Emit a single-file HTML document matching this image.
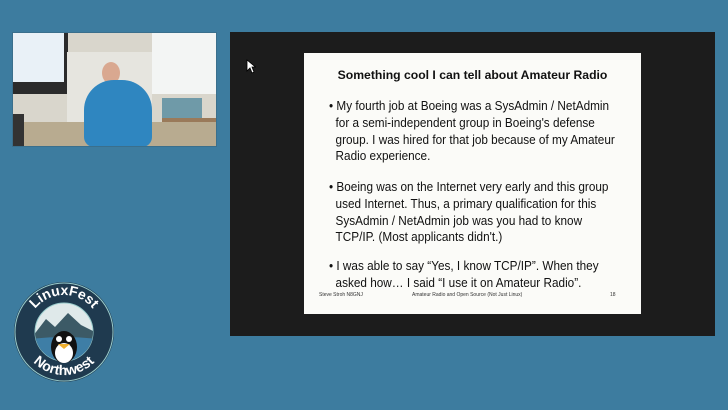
<!DOCTYPE html>
<html><head><style>
body{margin:0;width:728px;height:410px;background:#3d7c9f;position:relative;overflow:hidden;font-family:"Liberation Sans",sans-serif}
.a{position:absolute}
.slide{left:304px;top:53px;width:337px;height:261px;background:#fbfbf8}
.t{position:absolute;left:0;width:337px;text-align:center;top:15px;font-weight:bold;font-size:12.2px;color:#111}
.p{position:absolute;left:25px;font-size:13px;line-height:16.8px;color:#111;white-space:nowrap;transform:scaleX(0.905);transform-origin:0 0}
.f{position:absolute;top:239px;font-size:5px;color:#333}
</style></head><body>
<div class="a" style="left:12px;top:32px;width:205px;height:115px;background:#d9d6cc;overflow:hidden">
 <div class="a" style="left:0;top:0;width:56px;height:62px;background:#2b2b2b"></div>
 <div class="a" style="left:0;top:0;width:52px;height:50px;background:#e9f1f7"></div>
 <div class="a" style="left:55px;top:20px;width:85px;height:80px;background:#e6e5df"></div>
 <div class="a" style="left:140px;top:0;width:65px;height:62px;background:#f3f5f4"></div>
 <div class="a" style="left:150px;top:66px;width:40px;height:20px;background:#6f9aa8"></div>
 <div class="a" style="left:150px;top:86px;width:55px;height:8px;background:#9a7a5a"></div>
 <div class="a" style="left:0;top:90px;width:205px;height:25px;background:#b8ab90"></div>
 <div class="a" style="left:0;top:82px;width:12px;height:33px;background:#333"></div>
 <div class="a" style="left:90px;top:30px;width:18px;height:22px;border-radius:50%;background:#d9a890"></div>
 <div class="a" style="left:72px;top:48px;width:68px;height:67px;border-radius:30px 30px 10px 10px;background:#2f86c0"></div>
 <div class="a" style="left:0;top:0;width:205px;height:115px;border:1px solid #3a6f8c;box-sizing:border-box"></div>
</div>
<div class="a" style="left:230px;top:32px;width:485px;height:304px;background:#1c1c1c"></div>
<svg class="a" style="left:246px;top:59px" width="10" height="15" viewBox="0 0 10 15"><path d="M1 1 L1 12 L4 9 L6 14 L8 13 L6 8 L9.5 8 Z" fill="#fff" stroke="#000" stroke-width="0.8"/></svg>
<div class="a slide">
 <div class="t">Something cool I can tell about Amateur Radio</div>
 <div class="p" style="top:45px">• My fourth job at Boeing was a SysAdmin / NetAdmin<br>&nbsp;&nbsp;for a semi-independent group in Boeing's defense<br>&nbsp;&nbsp;group. I was hired for that job because of my Amateur<br>&nbsp;&nbsp;Radio experience.</div>
 <div class="p" style="top:126px">• Boeing was on the Internet very early and this group<br>&nbsp;&nbsp;used Internet. Thus, a primary qualification for this<br>&nbsp;&nbsp;SysAdmin / NetAdmin job was you had to know<br>&nbsp;&nbsp;TCP/IP. (Most applicants didn't.)</div>
 <div class="p" style="top:205px">• I was able to say “Yes, I know TCP/IP”. When they<br>&nbsp;&nbsp;asked how… I said “I use it on Amateur Radio”.</div>
 <div class="f" style="left:15px">Steve Stroh N8GNJ</div>
 <div class="f" style="left:108px">Amateur Radio and Open Source (Not Just Linux)</div>
 <div class="f" style="left:306px">18</div>
</div>
<svg class="a" style="left:13px;top:281px" width="102" height="102" viewBox="0 0 102 102">
 <defs>
  <path id="top" d="M14 51 A37 37 0 0 1 88 51"/>
  <path id="bot" d="M8 51 A43 43 0 0 0 94 51"/>
 </defs>
 <circle cx="51" cy="51" r="50" fill="#1f3a4f"/>
 <circle cx="51" cy="51" r="49" fill="none" stroke="#9cc" stroke-width="1"/>
 <circle cx="51" cy="51" r="29" fill="#dfe9ea" stroke="#9cc" stroke-width="1"/>
 <clipPath id="c"><circle cx="51" cy="51" r="29"/></clipPath>
 <g clip-path="url(#c)">
 <path d="M20 55 L33 38 L42 46 L55 32 L68 44 L84 52 L84 70 L19 70Z" fill="#3c5a66"/>
 <path d="M18 58 Q51 54 84 58 L84 85 L18 85Z" fill="#3e7ea6"/>
 </g>
 <ellipse cx="51" cy="66" rx="13" ry="16" fill="#111"/>
 <ellipse cx="51" cy="72" rx="9" ry="10" fill="#fff"/>
 <circle cx="46" cy="58" r="3" fill="#fff"/><circle cx="56" cy="58" r="3" fill="#fff"/>
 <path d="M45 63 L57 63 L51 68Z" fill="#f0b030"/>
 <text font-family="Liberation Sans" font-weight="bold" font-size="14" fill="#fff"><textPath href="#top" startOffset="50%" text-anchor="middle">LinuxFest</textPath></text>
 <text font-family="Liberation Sans" font-weight="bold" font-size="14" fill="#fff"><textPath href="#bot" startOffset="50%" text-anchor="middle">Northwest</textPath></text>
</svg>
</body></html>
